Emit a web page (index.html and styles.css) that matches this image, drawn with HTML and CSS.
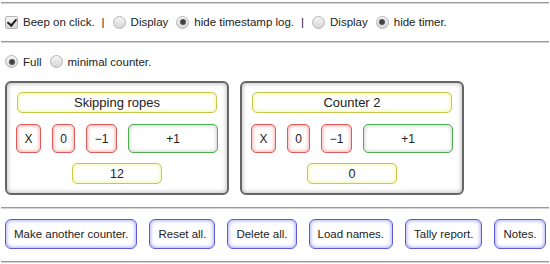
FILE: index.html
```html
<!DOCTYPE html>
<html lang="en">
<head>
    <meta charset="UTF-8">
    <meta name="viewport" content="width=device-width, initial-scale=1.0">
    <title>Tally counter</title>
    <link rel="stylesheet" href="styles.css">
</head>
<body>
    <hr class="rule">
    <div class="options">
        <label class="opt"><input type="checkbox" class="tick" checked> Beep on click.</label>
        <span class="sep">|</span>
        <label class="opt"><input type="radio" class="dot" name="stamp"> Display</label>
        <label class="opt"><input type="radio" class="dot" name="stamp" checked> hide timestamp log.</label>
        <span class="sep">|</span>
        <label class="opt"><input type="radio" class="dot" name="timer"> Display</label>
        <label class="opt"><input type="radio" class="dot" name="timer" checked> hide timer.</label>
    </div>
    <hr class="rule">
    <div class="modes">
        <label class="opt"><input type="radio" class="dot" name="mode" checked> Full</label>
        <label class="opt"><input type="radio" class="dot" name="mode"> minimal counter.</label>
    </div>

    <div class="counters">
        <div class="counter">
            <div class="counter-name">Skipping ropes</div>
            <div class="counter-buttons">
                <button class="btn-red btn-x">X</button>
                <button class="btn-red btn-zero">0</button>
                <button class="btn-red btn-minus">&minus;1</button>
                <button class="btn-green">+1</button>
            </div>
            <div class="counter-value">12</div>
        </div>
        <div class="counter">
            <div class="counter-name">Counter 2</div>
            <div class="counter-buttons">
                <button class="btn-red btn-x">X</button>
                <button class="btn-red btn-zero">0</button>
                <button class="btn-red btn-minus">&minus;1</button>
                <button class="btn-green">+1</button>
            </div>
            <div class="counter-value">0</div>
        </div>
    </div>

    <hr class="rule">
    <div class="actions">
        <button class="btn-blue">Make another counter.</button>
        <button class="btn-blue">Reset all.</button>
        <button class="btn-blue">Delete all.</button>
        <button class="btn-blue">Load names.</button>
        <button class="btn-blue">Tally report.</button>
        <button class="btn-blue">Notes.</button>
    </div>
    <hr class="rule">
</body>
</html>
```

FILE: styles.css
```css
* {
    margin: 0;
    padding: 0;
    box-sizing: border-box;
}

body {
    font-family: "Liberation Sans", Arial, sans-serif;
    font-size: 11.5px;
    color: #222;
    background: #fff;
}

.rule {
    height: 2px;
    margin: 0 1px;
    border: none;
    border-top: 1px solid #9a9a9a;
    border-bottom: 1px solid #d4d4d4;
}

.rule:first-child {
    margin-top: 2px;
}

.options,
.modes {
    display: flex;
    align-items: center;
    padding-left: 5px;
    white-space: nowrap;
}

.options {
    height: 37px;
    padding-bottom: 1px;
}

.modes {
    height: 37px;
}

.opt {
    display: flex;
    align-items: center;
    gap: 5px;
    margin-right: 8px;
}

.sep {
    margin: 0 8px 0 -1px;
}

/* checkbox and radios drawn by hand, grey old-style look */
.tick,
.dot {
    appearance: none;
    -webkit-appearance: none;
    width: 13px;
    height: 13px;
    border: 1px solid #b4b4b4;
    background: linear-gradient(#f6f6f6, #d6d6d6);
    position: relative;
    flex: none;
}

.tick {
    border-radius: 2px;
}

.tick:checked::after {
    content: "";
    position: absolute;
    left: 3px;
    top: 0px;
    width: 4px;
    height: 7px;
    border: solid #222;
    border-width: 0 2px 2px 0;
    transform: rotate(40deg);
}

.dot {
    border-radius: 50%;
}

.dot:checked::after {
    content: "";
    position: absolute;
    left: 2.5px;
    top: 2.5px;
    width: 6px;
    height: 6px;
    border-radius: 50%;
    background: radial-gradient(#333, #666);
}

.counters {
    display: flex;
    gap: 11px;
    padding-left: 5px;
    margin-top: 1px;
    margin-bottom: 12px;
}

.counter {
    width: 224px;
    height: 114px;
    border: 2px solid #666;
    border-radius: 6px;
    box-shadow: inset 0 0 5px #aaa;
    display: flex;
    flex-direction: column;
    align-items: center;
    padding-top: 9px;
}

.counter-name,
.counter-value {
    height: 21px;
    border: 1px solid #c8c84a;
    border-radius: 5px;
    box-shadow: inset 0 0 4px #f0f080;
    background: #fff;
    display: flex;
    align-items: center;
    justify-content: center;
}

.counter-name {
    width: 200px;
    font-size: 13px;
}

.counter-value {
    width: 90px;
    font-size: 12.5px;
}

.counter-buttons {
    display: flex;
    gap: 11px;
    margin: 11px 0 10px;
    width: 202px;
}

button {
    font-family: inherit;
    color: #222;
    background: #fff;
    cursor: pointer;
    white-space: nowrap;
    flex: none;
}

.btn-red,
.btn-green {
    height: 29px;
    border-radius: 5px;
    font-size: 12px;
}

.btn-red {
    border: 1px solid #e05a5a;
    box-shadow: inset 0 0 4px #f08a8a;
}

.btn-x {
    width: 25px;
}

.btn-zero {
    width: 23px;
}

.btn-minus {
    width: 31px;
}

.btn-green {
    width: 90px;
    border: 1px solid #4caf50;
    box-shadow: inset 0 0 4px #bbb;
}

.actions {
    display: flex;
    gap: 12px;
    padding: 10px 0 12px 5px;
}

.btn-blue {
    height: 30px;
    padding: 0 8px;
    border: 1px solid #5a5ae0;
    border-radius: 6px;
    box-shadow: inset 0 0 4px #8a8af0;
    font-size: 11.5px;
}
```
